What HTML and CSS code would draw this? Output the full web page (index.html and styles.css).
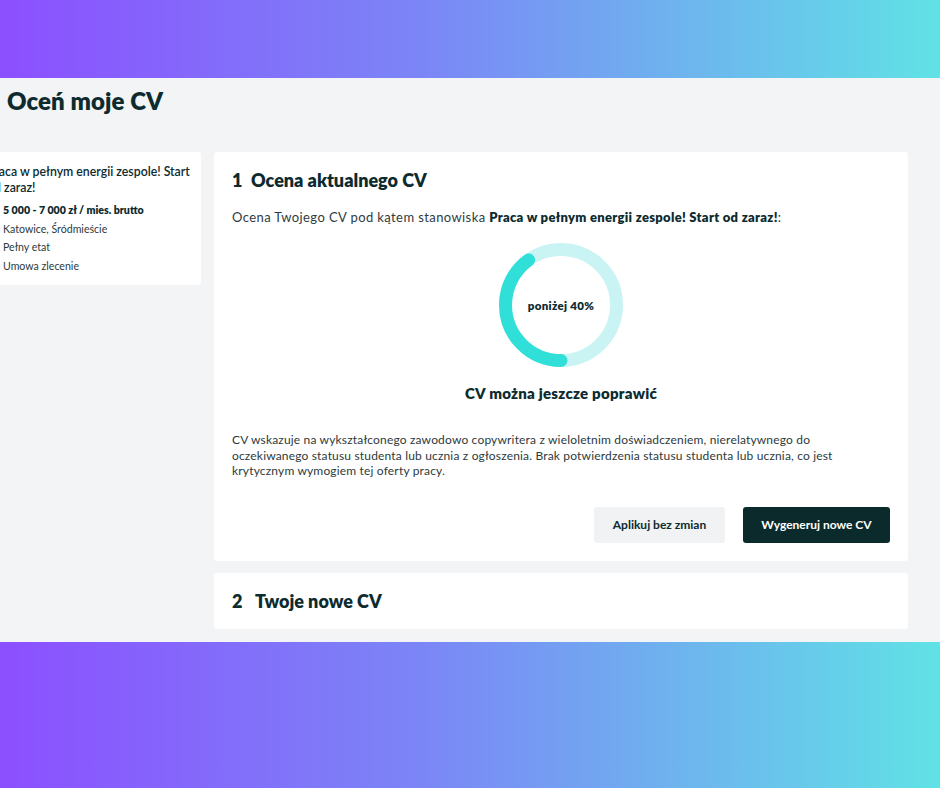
FILE: index.html
```html
<!DOCTYPE html>
<html lang="pl">
<head>
    <meta charset="UTF-8">
    <meta name="viewport" content="width=device-width, initial-scale=1.0">
    <title>Oceń moje CV</title>
    <link rel="stylesheet" href="styles.css">
</head>
<body>
    <div class="band"></div>

    <main class="page">
        <h1 class="page-title">Oceń moje CV</h1>

        <div class="layout">
            <aside class="offer-card">
                <div class="offer-title">Praca w pełnym energii zespole! Start od zaraz!</div>
                <ul class="offer-meta">
                    <li class="offer-salary">5 000 - 7 000 zł / mies. brutto</li>
                    <li>Katowice, Śródmieście</li>
                    <li>Pełny etat</li>
                    <li>Umowa zlecenie</li>
                </ul>
            </aside>

            <section class="steps">
                <div class="card">
                    <h2 class="step-title"><span class="step-num">1</span>Ocena aktualnego CV</h2>
                    <p class="intro">Ocena Twojego CV pod kątem stanowiska <strong>Praca w pełnym energii zespole! Start od zaraz!</strong>:</p>

                    <div class="score">
                        <div class="donut">
                            <svg width="124" height="124" viewBox="0 0 124 124">
                                <circle cx="62" cy="62" r="55.5" fill="none" stroke="#c9f4f3" stroke-width="13"/>
                                <!-- 40% łuku, start od dołu -->
                                <circle cx="62" cy="62" r="55.5" fill="none" stroke="#30e0d8" stroke-width="13"
                                        stroke-linecap="round" stroke-dasharray="139.5 348.7"
                                        transform="rotate(90 62 62)"/>
                            </svg>
                            <span class="donut-label">poniżej 40%</span>
                        </div>
                        <div class="score-verdict">CV można jeszcze poprawić</div>
                    </div>

                    <p class="summary">CV wskazuje na wykształconego zawodowo copywritera z wieloletnim doświadczeniem, nierelatywnego do oczekiwanego statusu studenta lub ucznia z ogłoszenia. Brak potwierdzenia statusu studenta lub ucznia, co jest krytycznym wymogiem tej oferty pracy.</p>

                    <div class="actions">
                        <button class="btn btn-light">Aplikuj bez zmian</button>
                        <button class="btn btn-dark">Wygeneruj nowe CV</button>
                    </div>
                </div>

                <div class="card card-collapsed">
                    <h2 class="step-title"><span class="step-num step-num-wide">2</span>Twoje nowe CV</h2>
                </div>
            </section>
        </div>
    </main>

    <div class="band band-bottom"></div>
</body>
</html>
```

FILE: styles.css
```css
* {
    box-sizing: border-box;
}

body {
    margin: 0;
    width: 940px;
    height: 788px;
    overflow: hidden;
    font-family: Lato, 'Noto Sans', sans-serif;
    color: #0d2b2f;
    background: #f2f4f5;
}

.band {
    height: 78px;
    background: linear-gradient(90deg, #8c4fff 0%, #7b86f6 45%, #60e2e6 100%);
}

.band-bottom {
    height: 146px;
}

.page {
    height: 564px;
    padding: 8px 32px 0 7px;
    overflow: hidden;
}

.page-title {
    margin: 0;
    font-size: 24px;
    line-height: 30px;
    font-weight: 800;
    letter-spacing: 0.1px;
}

.layout {
    display: grid;
    grid-template-columns: 230px 694px;
    gap: 13px;
    margin: 36px 0 0 -36px;
    align-items: start;
}

.offer-card {
    background: #fff;
    border-radius: 3px;
    padding: 12px 5px 10px 16px;
}

.offer-title {
    font-size: 12.3px;
    line-height: 16px;
    font-weight: 600;
    color: #0d2b2f;
}

.offer-meta {
    list-style: none;
    margin: 5px 0 0;
    padding: 0 0 0 16px;
    font-size: 10.6px;
    line-height: 18.6px;
    color: #2d3a3c;
}

.offer-salary {
    font-weight: 800;
    color: #0d2b2f;
}

.steps {
    display: flex;
    flex-direction: column;
    gap: 12px;
}

.card {
    background: #fff;
    border-radius: 3px;
    padding: 16px 18px 18px;
}

.card-collapsed {
    padding: 16px 18px;
}

.step-title {
    margin: 0;
    font-size: 18px;
    line-height: 24px;
    font-weight: 800;
}

.step-num {
    display: inline-block;
    width: 19px;
}

.step-num-wide {
    width: 23px;
}

.intro {
    margin: 16px 0 0;
    font-size: 13px;
    line-height: 18px;
    letter-spacing: 0.4px;
    color: #2f3b3e;
}

.intro strong {
    font-weight: 800;
    letter-spacing: 0.3px;
    color: #0d2b2f;
}

.score {
    display: flex;
    flex-direction: column;
    align-items: center;
    margin-top: 17px;
}

.donut {
    position: relative;
    width: 124px;
    height: 124px;
}

.donut svg {
    display: block;
}

.donut-label {
    position: absolute;
    inset: 0;
    display: flex;
    align-items: center;
    justify-content: center;
    font-size: 11.5px;
    font-weight: 800;
    letter-spacing: 0.3px;
}

.score-verdict {
    margin-top: 16px;
    font-size: 15px;
    line-height: 20px;
    font-weight: 800;
    letter-spacing: 0.25px;
}

.summary {
    max-width: 652px;
    margin: 29px 0 0;
    font-size: 12px;
    line-height: 15.5px;
    letter-spacing: 0.17px;
    color: #2d3a3c;
}

.actions {
    display: flex;
    justify-content: flex-end;
    gap: 18px;
    margin-top: 28px;
}

.btn {
    height: 36px;
    border: none;
    border-radius: 3px;
    font-family: inherit;
    font-size: 12px;
    font-weight: 700;
    cursor: pointer;
}

.btn-light {
    width: 131px;
    background: #f0f2f3;
    color: #0d2b2f;
}

.btn-dark {
    width: 147px;
    background: #0b2a2c;
    color: #fff;
}
```
